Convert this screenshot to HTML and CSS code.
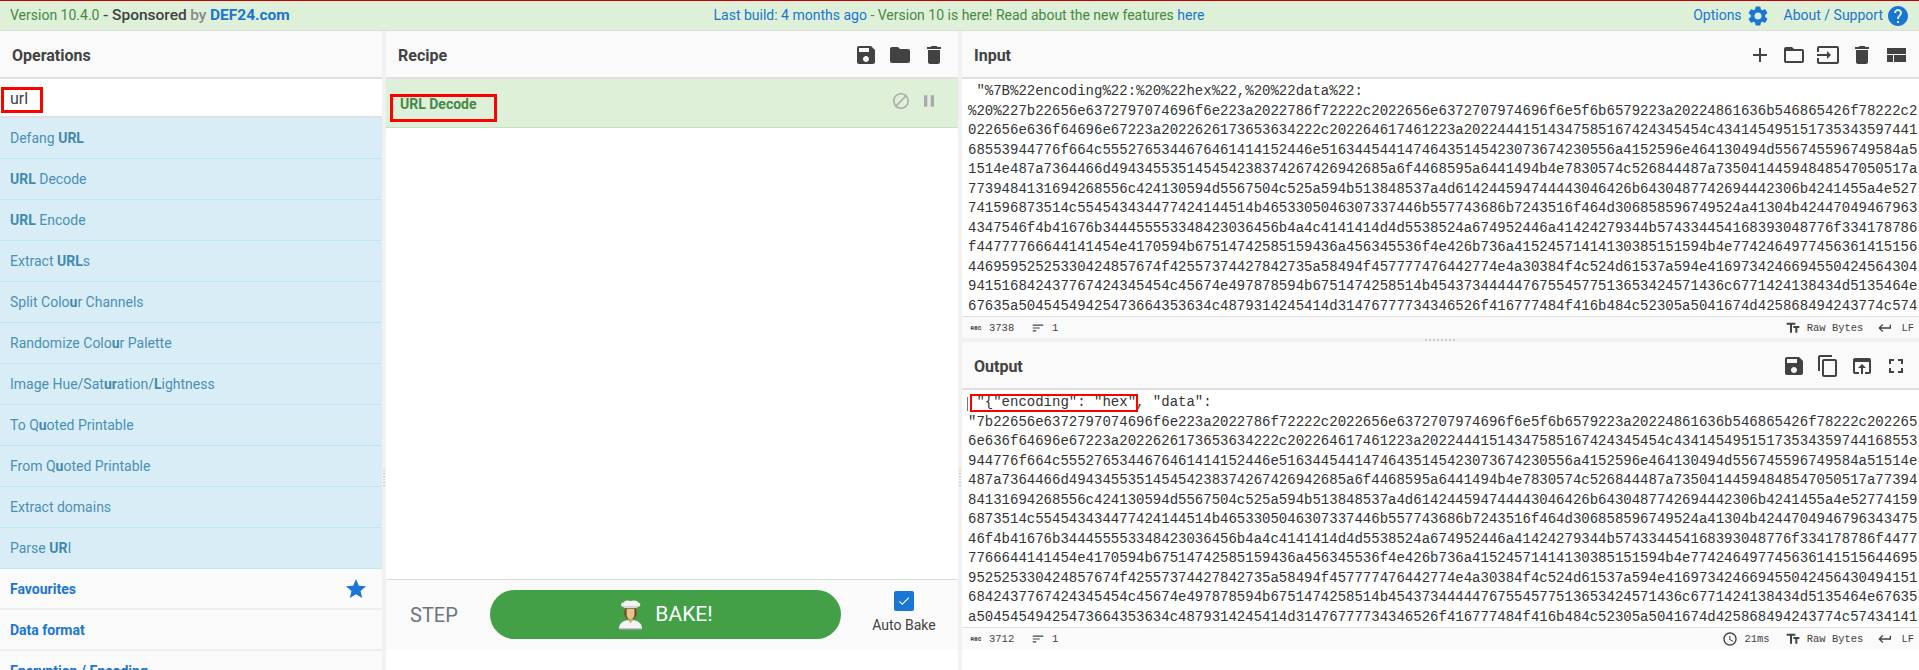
FILE: index.html
```html
<!DOCTYPE html>
<html lang="en">
<head>
<meta charset="utf-8">
<title>CyberChef</title>
<link rel="stylesheet" href="styles.css">
</head>
<body>
<svg class="defs" width="0" height="0" aria-hidden="true">
  <symbol id="i-save" viewBox="0 0 24 24"><path d="M17 3H5c-1.11 0-2 .9-2 2v14c0 1.1.89 2 2 2h14c1.1 0 2-.9 2-2V7l-4-4zm-5 16c-1.66 0-3-1.34-3-3s1.34-3 3-3 3 1.34 3 3-1.34 3-3 3zm3-10H5V5h10v4z"/></symbol>
  <symbol id="i-folder" viewBox="0 0 24 24"><path d="M10 4H4c-1.1 0-1.99.9-1.99 2L2 18c0 1.1.9 2 2 2h16c1.1 0 2-.9 2-2V8c0-1.1-.9-2-2-2h-8l-2-2z"/></symbol>
  <symbol id="i-delete" viewBox="0 0 24 24"><path d="M6 19c0 1.1.9 2 2 2h8c1.1 0 2-.9 2-2V7H6v12zM19 4h-3.5l-1-1h-5l-1 1H5v2h14V4z"/></symbol>
  <symbol id="i-add" viewBox="0 0 24 24"><path d="M19 13h-6v6h-2v-6H5v-2h6V5h2v6h6v2z"/></symbol>
  <symbol id="i-folder-o" viewBox="0 0 24 24"><path d="M20 6h-8l-2-2H4c-1.1 0-1.99.9-1.99 2L2 18c0 1.1.9 2 2 2h16c1.1 0 2-.9 2-2V8c0-1.1-.9-2-2-2zm0 12H4V8h16v10z"/></symbol>
  <symbol id="i-input" viewBox="0 0 24 24"><path d="M21 3.01H3c-1.1 0-2 .9-2 2V9h2V4.99h18v14.03H3V15H1v4.01c0 1.1.9 1.98 2 1.98h18c1.1 0 2-.88 2-1.98v-14c0-1.11-.9-2-2-2zM11 16l4-4-4-4v3H1v2h10v3z"/></symbol>
  <symbol id="i-layout" viewBox="0 0 24 24"><path d="M3 19h6v-7H3v7zm7 0h12v-7H10v7zM3 5v6h19V5H3z"/></symbol>
  <symbol id="i-copy" viewBox="0 0 24 24"><path d="M16 1H4c-1.1 0-2 .9-2 2v14h2V3h12V1zm3 4H8c-1.1 0-2 .9-2 2v14c0 1.1.9 2 2 2h11c1.1 0 2-.9 2-2V7c0-1.1-.9-2-2-2zm0 16H8V7h11v14z"/></symbol>
  <symbol id="i-open" viewBox="0 0 24 24"><path d="M19 4H5c-1.11 0-2 .9-2 2v12c0 1.1.89 2 2 2h4v-2H5V8h14v10h-4v2h4c1.1 0 2-.9 2-2V6c0-1.1-.89-2-2-2zm-7 6l-4 4h3v6h2v-6h3l-4-4z"/></symbol>
  <symbol id="i-full" viewBox="0 0 24 24"><path d="M7 14H5v5h5v-2H7v-3zm-2-4h2V7h3V5H5v5zm12 7h-3v2h5v-5h-2v3zM14 5v2h3v3h2V5h-5z"/></symbol>
  <symbol id="i-gear" viewBox="0 0 24 24"><path d="M19.14 12.94c.04-.3.06-.61.06-.94 0-.32-.02-.64-.07-.94l2.03-1.58c.18-.14.23-.41.12-.61l-1.92-3.32c-.12-.22-.37-.29-.59-.22l-2.39.96c-.5-.38-1.03-.7-1.62-.94l-.36-2.54c-.04-.24-.24-.41-.48-.41h-3.84c-.24 0-.43.17-.47.41l-.36 2.54c-.59.24-1.13.57-1.62.94l-2.39-.96c-.22-.08-.47 0-.59.22L2.74 8.87c-.12.21-.08.47.12.61l2.03 1.58c-.05.3-.09.63-.09.94s.02.64.07.94l-2.03 1.58c-.18.14-.23.41-.12.61l1.92 3.32c.12.22.37.29.59.22l2.39-.96c.5.38 1.03.7 1.62.94l.36 2.54c.05.24.24.41.48.41h3.84c.24 0 .44-.17.47-.41l.36-2.54c.59-.24 1.13-.56 1.62-.94l2.39.96c.22.08.47 0 .59-.22l1.92-3.32c.12-.22.07-.47-.12-.61l-2.01-1.58zM12 15.6c-1.98 0-3.6-1.62-3.6-3.6s1.62-3.6 3.6-3.6 3.6 1.62 3.6 3.6-1.62 3.6-3.6 3.6z"/></symbol>
  <symbol id="i-help" viewBox="2 2 20 20"><path d="M12 2C6.48 2 2 6.48 2 12s4.48 10 10 10 10-4.48 10-10S17.52 2 12 2zm1 17h-2v-2h2v2zm2.07-7.75l-.9.92C13.45 12.9 13 13.5 13 15h-2v-.5c0-1.1.45-2.1 1.17-2.83l1.24-1.26c.37-.36.59-.86.59-1.41 0-1.1-.9-2-2-2s-2 .9-2 2H8c0-2.21 1.79-4 4-4s4 1.79 4 4c0 .88-.36 1.68-.93 2.25z"/></symbol>
  <symbol id="i-star" viewBox="0 0 24 24"><path d="M12 17.27L18.18 21l-1.64-7.03L22 9.24l-7.19-.61L12 2 9.19 8.63 2 9.24l5.46 4.73L5.82 21z"/></symbol>
  <symbol id="i-block" viewBox="2 2 20 20"><path d="M12 2C6.48 2 2 6.48 2 12s4.48 10 10 10 10-4.48 10-10S17.52 2 12 2zM4 12c0-4.42 3.58-8 8-8 1.85 0 3.55.63 4.9 1.69L5.69 16.9C4.63 15.55 4 13.85 4 12zm8 8c-1.85 0-3.55-.63-4.9-1.69L18.31 7.1C19.37 8.45 20 10.15 20 12c0 4.42-3.58 8-8 8z"/></symbol>
  <symbol id="i-pause" viewBox="0 0 24 24"><path d="M6 19h4V5H6v14zm8-14v14h4V5h-4z"/></symbol>
  <symbol id="i-sort" viewBox="0 0 24 24"><path d="M3 18h6v-2H3v2zM3 6v2h18V6H3zm0 7h12v-2H3v2z"/></symbol>
  <symbol id="i-text" viewBox="0 0 24 24"><path d="M2.5 4v3h5v12h3V7h5V4h-13zm19 5h-9v3h3v7h3v-7h3V9z"/></symbol>
  <symbol id="i-return" viewBox="0 0 24 24"><path d="M19 7v4H5.83l3.58-3.59L8 6l-6 6 6 6 1.41-1.41L5.83 13H21V7z"/></symbol>
  <symbol id="i-abc" viewBox="0 0 24 24"><path d="M21 11h-1.5v-.5h-2v3h2V13H21v1c0 .55-.45 1-1 1h-3c-.55 0-1-.45-1-1v-4c0-.55.45-1 1-1h3c.55 0 1 .45 1 1v1zM8 10v5H6.5v-1.5h-2V15H3v-5c0-.55.45-1 1-1h3c.55 0 1 .45 1 1zm-1.5.5h-2V12h2v-1.5zm7 1.5c.55 0 1 .45 1 1v1c0 .55-.45 1-1 1h-4V9h4c.55 0 1 .45 1 1v1c0 .55-.45 1-1 1zM11 10.5v.75h2v-.75h-2zm2 2.25h-2v.75h2v-.75z"/></symbol>
  <symbol id="i-clock" viewBox="0 0 24 24"><path d="M11.99 2C6.47 2 2 6.48 2 12s4.47 10 9.99 10C17.52 22 22 17.52 22 12S17.52 2 11.99 2zM12 20c-4.42 0-8-3.58-8-8s3.58-8 8-8 8 3.58 8 8-3.58 8-8 8zm.5-13H11v6l5.25 3.15.75-1.23-4.5-2.67z"/></symbol>
</svg>

<header class="banner">
  <div class="banner-left"><span class="green">Version 10.4.0</span> <span class="sponsor">- Sponsored</span> <span class="by">by</span> <b class="def">DEF24.com</b></div>
  <div class="banner-mid"><span class="blue">Last build: 4 months ago</span> <span class="green">- Version 10 is here! Read about the new features</span> <span class="blue">here</span></div>
  <div class="banner-right">
    <span class="blue">Options</span><svg class="ic-banner"><use href="#i-gear"/></svg>
    <span class="blue about">About / Support</span><svg class="ic-help"><use href="#i-help"/></svg>
  </div>
</header>

<main class="app">
  <section class="col-ops">
    <div class="head"><h2>Operations</h2></div>
    <div class="search">url<span class="mark mark-search"></span></div>
    <ul class="ops">
      <li>Defang <b>URL</b></li>
      <li><b>URL</b> Decode</li>
      <li><b>URL</b> Encode</li>
      <li>Extract <b>URL</b>s</li>
      <li>Split Colo<b>u</b>r Channels</li>
      <li>Randomize Colo<b>u</b>r Palette</li>
      <li>Image Hue/Sat<b>ur</b>ation/<b>L</b>ightness</li>
      <li>To Q<b>u</b>oted Printable</li>
      <li>From Q<b>u</b>oted Printable</li>
      <li>Extract domains</li>
      <li>Parse <b>UR</b>I</li>
    </ul>
    <div class="cat">Favourites<svg class="ic-star"><use href="#i-star"/></svg></div>
    <div class="cat">Data format</div>
    <div class="cat">Encryption / Encoding</div>
  </section>

  <div class="gutter-v"><span class="dots-v"></span></div>

  <section class="col-recipe">
    <div class="recipe-box">
      <div class="head"><h2>Recipe</h2>
        <div class="tools tools-recipe">
          <svg class="ic"><use href="#i-save"/></svg>
          <svg class="ic"><use href="#i-folder"/></svg>
          <svg class="ic"><use href="#i-delete"/></svg>
        </div>
      </div>
      <div class="rec-op">
        <span class="rec-name">URL Decode</span>
        <div class="rec-tools">
          <svg class="ic-block"><use href="#i-block"/></svg>
          <svg class="ic-pause"><use href="#i-pause"/></svg>
        </div>
        <span class="mark mark-recipe"></span>
      </div>
      <div class="rec-space"></div>
      <div class="bake">
        <span class="step">STEP</span>
        <div class="bake-btn">
          <svg class="chef" viewBox="0 0 26 32">
            <path d="M5 8C2 7 3 3 6 3.500 7 1 11 1 13 2c3-1 7-1 8 1.500 3 0 3 4 0 4.500z" fill="#f3f3f3"/>
            <path d="M6 7h14v2.500H6z" fill="#d6d6d6"/>
            <path d="M7 9.500h12l.5 7-2.500 4H9l-2.500-4z" fill="#7a4a26"/>
            <path d="M9 10h8v6c0 3-1.800 5-4 5s-4-2-4-5z" fill="#e6c48e"/>
            <path d="M1 31c0-5 3-8 8-9h8c5 1 8 4 8 9z" fill="#f4f4f4"/>
            <path d="M1 30.500h24V32H1z" fill="#9a9a9a"/>
            <path d="M10 21h6l-3 4z" fill="#d3a76e"/>
          </svg>
          <span>BAKE!</span>
        </div>
        <div class="auto">
          <span class="check"><svg viewBox="0 0 24 24" class="ic-check"><path d="M9 16.170L4.830 12l-1.420 1.410L9 19 21 7l-1.410-1.410z"/></svg></span>
          <span class="auto-label">Auto Bake</span>
        </div>
      </div>
    </div>
  </section>

  <div class="gutter-v"><span class="dots-v"></span></div>

  <section class="col-io">
    <div class="pane pane-input">
      <div class="head"><h2>Input</h2>
        <div class="tools tools-input">
          <svg class="ic"><use href="#i-add"/></svg>
          <svg class="ic"><use href="#i-folder-o"/></svg>
          <svg class="ic"><use href="#i-input"/></svg>
          <svg class="ic"><use href="#i-delete"/></svg>
          <svg class="ic"><use href="#i-layout"/></svg>
        </div>
      </div>
      <pre class="text text-in"> "%7B%22encoding%22:%20%22hex%22,%20%22data%22:
%20%227b22656e6372797074696f6e223a2022786f72222c2022656e6372707974696f6e5f6b6579223a20224861636b546865426f78222c2
022656e636f64696e67223a2022626173653634222c202264617461223a20224441514347585167424345454c434145495151735343597441
68553944776f664c5552765344676461414152446e51634454414746435145423073674230556a4152596e464130494d556745596749584a5
1514e487a7364466d494345535145454238374267426942685a6f4468595a6441494b4e7830574c526844487a73504144594848547050517a
7739484131694268556c424130594d5567504c525a594b513848537a4d614244594744443046426b6430487742694442306b4241455a4e527
741596873514c554543434477424144514b4653305046307337446b557743686b7243516f464d306858596749524a41304b42447049467963
4347546f4b41676b344455553348423036456b4a4c4141414d4d5538524a674952446a41424279344b574334454168393048776f334178786
f44777766644141454e4170594b67514742585159436a456345536f4e426b736a41524571414130385151594b4e7742464977456361415156
44695952525330424857674f42557374427842735a58494f457777476442774e4a30384f4c524d61537a594e4169734246694550424564304
941516842437767424345454c45674e497878594b6751474258514b45437344444767554577513653424571436c6771424138434d5135464e
67635a50454549425473664353634c4879314245414d31476777734346526f416777484f416b484c52305a5041674d425868494243774c574</pre>
      <div class="status">
        <div class="st-group"><svg class="ic-st ic-abc"><use href="#i-abc"/></svg><span class="st-num">3738</span><svg class="ic-st ic-sort"><use href="#i-sort"/></svg><span>1</span></div>
        <div class="st-group"><svg class="ic-st ic-tt"><use href="#i-text"/></svg><span class="st-raw">Raw Bytes</span><svg class="ic-st ic-ret"><use href="#i-return"/></svg><span>LF</span></div>
      </div>
    </div>
    <div class="gutter-h"><span class="dots-h"></span></div>
    <div class="pane pane-output">
      <div class="head"><h2>Output</h2>
        <div class="tools tools-output">
          <svg class="ic"><use href="#i-save"/></svg>
          <svg class="ic"><use href="#i-copy"/></svg>
          <svg class="ic"><use href="#i-open"/></svg>
          <svg class="ic"><use href="#i-full"/></svg>
        </div>
      </div>
      <div class="out-wrap">
        <span class="caret"></span>
        <span class="mark mark-output"></span>
        <pre class="text text-out"> "{"encoding": "hex", "data":
"7b22656e6372797074696f6e223a2022786f72222c2022656e6372707974696f6e5f6b6579223a20224861636b546865426f78222c202265
6e636f64696e67223a2022626173653634222c202264617461223a20224441514347585167424345454c43414549515173534359744168553
944776f664c5552765344676461414152446e51634454414746435145423073674230556a4152596e464130494d556745596749584a51514e
487a7364466d494345535145454238374267426942685a6f4468595a6441494b4e7830574c526844487a73504144594848547050517a77394
84131694268556c424130594d5567504c525a594b513848537a4d614244594744443046426b6430487742694442306b4241455a4e52774159
6873514c554543434477424144514b4653305046307337446b557743686b7243516f464d306858596749524a41304b4244704946796343475
46f4b41676b344455553348423036456b4a4c4141414d4d5538524a674952446a41424279344b574334454168393048776f334178786f4477
7766644141454e4170594b67514742585159436a456345536f4e426b736a41524571414130385151594b4e774246497745636141515644695
952525330424857674f42557374427842735a58494f457777476442774e4a30384f4c524d61537a594e416973424669455042456430494151
6842437767424345454c45674e497878594b6751474258514b45437344444767554577513653424571436c6771424138434d5135464e67635
a50454549425473664353634c4879314245414d31476777734346526f416777484f416b484c52305a5041674d425868494243774c57434141</pre>
      </div>
      <div class="status">
        <div class="st-group"><svg class="ic-st ic-abc"><use href="#i-abc"/></svg><span class="st-num">3712</span><svg class="ic-st ic-sort"><use href="#i-sort"/></svg><span>1</span></div>
        <div class="st-group"><svg class="ic-st ic-clock"><use href="#i-clock"/></svg><span class="st-ms">21ms</span><svg class="ic-st ic-tt"><use href="#i-text"/></svg><span class="st-raw">Raw Bytes</span><svg class="ic-st ic-ret"><use href="#i-return"/></svg><span>LF</span></div>
      </div>
    </div>
  </section>
</main>
</body>
</html>
```
FILE: styles.css
```css
* { box-sizing: border-box; }
html, body { margin: 0; padding: 0; height: 670px; overflow: hidden; background: #fff; }
body { font-family: Roboto, "Liberation Sans", sans-serif; font-size: 14px; color: #424242; }
.defs { position: absolute; }
.banner {
  height: 31px; border-top: 1px solid #c00; border-bottom: 1px solid #ddd; background: #dff0d8;
  display: grid; grid-template-columns: 1fr auto 1fr; align-items: center; padding: 0 11px 0 10px;
  line-height: 29px;
}
.green { color: #468847; }
.blue { color: #1976d2; }
.def { color: #1976d2; font-weight: 700; font-size: 15.5px; }
.sponsor { font-weight: 500; font-size: 15.5px; color: #424242; }
.by { font-weight: 500; font-size: 15.5px; color: #8a8a8a; }
.banner-right { display: flex; justify-content: flex-end; align-items: center; }
.ic-banner { width: 24px; height: 24px; fill: #1976d2; margin-left: 4px; }
.about { margin-left: 14px; }
.ic-help { width: 20px; height: 20px; fill: #1976d2; margin-left: 5px; }
.app { display: flex; height: 639px; }
.col-ops { width: 382px; overflow: hidden; }
.gutter-v { width: 4px; background: #f1f1f1; padding-top: 439px; display: flex; justify-content: center; align-items: flex-start; flex: none; }
.dots-v { width: 2px; height: 16px; background: repeating-linear-gradient(#ccc 0 1px, transparent 1px 3px); }
.col-recipe { width: 572px; }
.recipe-box { height: 618px; display: flex; flex-direction: column; }
.col-io { flex: 1; min-width: 0; display: flex; flex-direction: column; }
.head {
  height: 48px; background: #fafafa; border-bottom: 2px solid #e0e0e0; display: flex; align-items: center;
  justify-content: space-between; flex: none; position: relative; padding-left: 12px;
}
.head h2 { margin: 3px 0 0; font-size: 16px; font-weight: 700; color: #424242; }
.tools { display: flex; align-items: center; margin-top: 1px; }
.ic { width: 24px; height: 24px; fill: #424242; }
.tools-recipe { gap: 10px; padding-right: 12px; }
.tools-input { gap: 10px; padding-right: 11px; }
.tools-output { gap: 10px; padding-right: 11px; }
.search {
  height: 39px; position: relative; background: #fff; border-bottom: 2px solid #e0e0e0;
  font-size: 16px; line-height: 39px; padding-left: 10px; color: #424242;
}
.mark { position: absolute; border: 3px solid #f00; }
.mark-search { left: 1px; top: 8px; width: 42px; height: 26px; }
.ops { list-style: none; margin: 0; padding: 0; }
.ops li {
  height: 41px; line-height: 40px; padding-left: 10px; background: #d9edf7; color: #4a90b4;
  border-bottom: 1px solid #bce8f1;
}
.ops b { font-weight: 700; color: #4389ad; }
.cat {
  height: 41px; line-height: 40px; padding: 0 14px 0 10px; background: #fafafa; color: #1976d2; font-weight: 700;
  border-bottom: 2px solid #eee; display: flex; justify-content: space-between; align-items: center;
}
.ic-star { width: 24px; height: 24px; fill: #1976d2; }
.rec-op {
  height: 49px; background: #dff0d8; border-bottom: 1px solid #c8e0bf; position: relative; flex: none;
  display: flex; justify-content: space-between; align-items: flex-start; padding: 16px 19px 0 14px;
}
.rec-name { font-weight: 700; color: #468847; line-height: 18px; }
.rec-tools { display: flex; gap: 10px; align-items: center; margin-top: -4px; }
.ic-block { width: 16px; height: 16px; fill: #aaa; }
.ic-pause { width: 20px; height: 20px; fill: #aaa; }
.mark-recipe { left: 4px; top: 15px; width: 107px; height: 28px; }
.rec-space { flex: 1; }
.bake {
  height: 70px; flex: none; background: #fafafa; border-top: 1px solid #ddd; display: flex; align-items: flex-start;
  position: relative; padding-left: 24px;
}
.step { font-size: 20px; color: #6c757d; margin-top: 24px; width: 80px; line-height: 22px; }
.bake-btn {
  width: 351px; height: 49px; margin-top: 10px; border-radius: 25px; background: #43a047; color: #fff;
  display: flex; justify-content: center; align-items: center; gap: 12px; font-size: 21px; font-weight: 400;
}
.bake-btn span { margin-top: -2px; }
.chef { width: 25px; height: 31px; }
.auto { margin-left: 32px; width: 62px; display: flex; flex-direction: column; align-items: center; }
.check {
  width: 20px; height: 20px; background: #1976d2; border-radius: 2px; margin-top: 11px; display: block;
}
.ic-check { width: 20px; height: 20px; fill: #fff; display: block; padding: 3px; }
.auto-label { white-space: nowrap; margin-top: 6px; line-height: 16px; color: #424242; }
.pane { display: flex; flex-direction: column; background: #fff; }
.pane-input { height: 307px; }
.pane-output { height: 307px; }
.gutter-h { height: 4px; background: #f1f1f1; display: flex; justify-content: center; align-items: center; flex: none; }
.dots-h { width: 31px; height: 2px; background: repeating-linear-gradient(90deg, #ccc 0 2px, transparent 2px 4px); }
.text {
  margin: 0; font-family: "Liberation Mono", monospace; font-size: 14px; line-height: 19.5px; color: #333;
  padding: 3px 0 0 6px; flex: 1; overflow: hidden; white-space: pre;
}
.out-wrap { position: relative; flex: 1; display: flex; overflow: hidden; }
.caret { position: absolute; left: 5px; top: 7px; width: 1px; height: 14px; background: #777; }
.mark-output { left: 8px; top: 4px; width: 168px; height: 18px; border-width: 2px; }
.status {
  height: 22px; flex: none; background: #fafafa; border-top: 1px solid #e0e0e0; display: flex; justify-content: space-between;
  align-items: center; font-family: "Liberation Mono", monospace; font-size: 10.5px; color: #424242; padding: 0 5px 0 7px;
}
.st-group { display: flex; align-items: center; }
.ic-st { width: 14px; height: 14px; fill: #424242; flex: none; }
.ic-abc { width: 14px; height: 14px; margin-right: 6px; }
.st-num { width: 42px; }
.ic-sort { margin-right: 7px; }
.ic-clock { width: 16px; height: 16px; margin-right: 6px; }
.st-ms { margin-right: 15px; }
.ic-tt { width: 16px; height: 16px; margin-right: 6px; }
.st-raw { margin-right: 14px; }
.ic-ret { width: 16px; height: 16px; margin-right: 8px; }
```
